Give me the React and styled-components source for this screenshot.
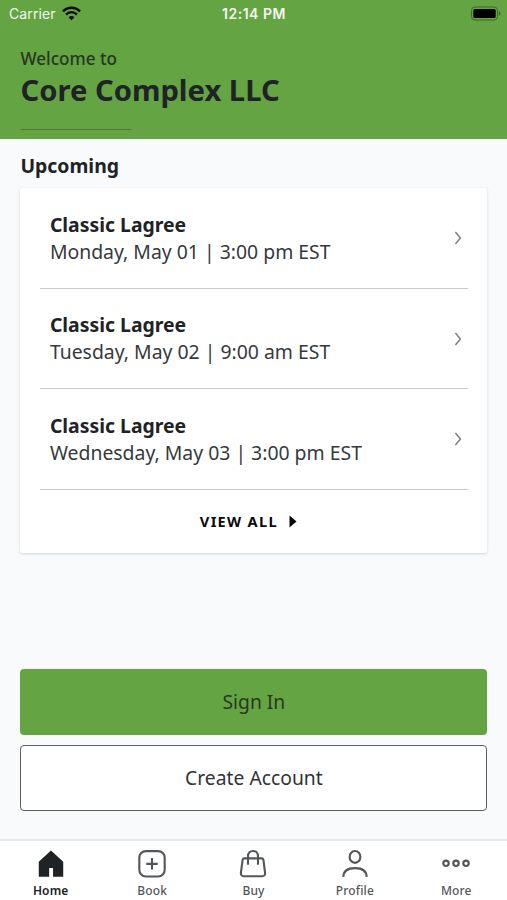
import React from "react";
import styled, { createGlobalStyle } from "styled-components";

const GlobalStyle = createGlobalStyle`
  * {
    box-sizing: border-box;
  }
  body {
    margin: 0;
    background: #f8fafc;
    color: #202326;
    font-family: "Noto Sans", "Open Sans", sans-serif;
  }
`;

const Screen = styled.div`
  display: flex;
  flex-direction: column;
  height: 900px;
`;

const Header = styled.header`
  height: 139px;
  padding: 0 20px;
  background: #64a443;
`;

const StatusBar = styled.div`
  display: grid;
  grid-template-columns: 1fr auto 1fr;
  align-items: center;
  height: 28px;
  margin: 0 -11px;
  color: #f3f8ef;
  font-family: Inter, sans-serif;
  font-size: 14px;
  line-height: 28px;
`;

const Carrier = styled.div`
  display: flex;
  align-items: center;
  gap: 6px;
  letter-spacing: 0.1px;
  svg {
    margin-top: -2px;
  }
`;

const Clock = styled.div`
  padding-left: 1px;
  font-size: 14px;
  font-weight: 600;
  letter-spacing: 0.5px;
`;

const Battery = styled.svg`
  justify-self: end;
  margin: -2px -4px 0 0;
`;

const Welcome = styled.div`
  margin-top: 19px;
  font-size: 17.1px;
  font-weight: 500;
  line-height: 23px;
  color: #26371f;
  padding-left: 0.5px;
`;

const Company = styled.h1`
  margin: 0;
  padding-left: 0.5px;
  font-size: 29.2px;
  font-weight: 700;
  line-height: 40px;
`;

const HeaderRule = styled.hr`
  width: 110px;
  height: 1px;
  margin: 18.5px 0 0 0.5px;
  border: 0;
  background: #4c7f36;
`;

const Content = styled.main`
  display: flex;
  flex-direction: column;
  flex: 1;
  padding: 12px 19.6px 28.5px 20.4px;
`;

const SectionTitle = styled.h2`
  margin: 0 0 8px;
  font-size: 19.4px;
  font-weight: 700;
  line-height: 29px;
`;

const Card = styled.section`
  height: 365px;
  padding: 0 19.5px;
  border-radius: 3px;
  background: #fff;
  box-shadow: 0 1px 3px rgba(30, 40, 40, 0.17);
`;

const ClassRow = styled.div`
  display: flex;
  align-items: center;
  justify-content: space-between;
  height: 100.6px;
  padding: 0 5px 0 10px;
  border-bottom: 1px solid #c9cacb;
  svg {
    margin-top: 1px;
  }
`;

const ClassName = styled.div`
  font-size: 19.4px;
  font-weight: 700;
  line-height: 27px;
`;

const ClassTime = styled.div`
  font-size: 19.4px;
  line-height: 27px;
  color: #36393c;
`;

const ViewAll = styled.div`
  display: flex;
  align-items: center;
  justify-content: center;
  gap: 11px;
  height: 63px;
  padding-right: 11px;
  color: #090a0b;
  font-size: 14.6px;
  font-weight: 700;
  letter-spacing: 1.3px;
`;

const Actions = styled.div`
  display: flex;
  flex-direction: column;
  gap: 10px;
  margin-top: auto;
`;

const Button = styled.button`
  height: 66px;
  padding: 0;
  border: ${(props) => (props.$primary ? "0" : "1.5px solid #5b5e60")};
  border-radius: 4px;
  background: ${(props) => (props.$primary ? "#64a443" : "#fff")};
  color: ${(props) => (props.$primary ? "#263820" : "#303336")};
  font-family: inherit;
  font-size: 19.3px;
`;

const TabBar = styled.nav`
  display: grid;
  grid-template-columns: repeat(5, 1fr);
  height: 61px;
  border-top: 2px solid #e7e9eb;
  background: #fff;
`;

const Tab = styled.div`
  display: flex;
  flex-direction: column;
  align-items: center;
  padding-top: 7px;
  color: ${(props) => (props.$active ? "#202326" : "#54575a")};
  font-size: 12px;
  font-weight: ${(props) => (props.$active ? 600 : 500)};
  line-height: 16px;
  letter-spacing: 0.15px;
  svg {
    margin-bottom: 5px;
  }
`;

const WifiIcon = () => (
  <svg width="19" height="15" viewBox="0 0 19 15" fill="none" stroke="#080b06">
    <path d="M1 5.3C5.8.4 13.2.4 18 5.3" strokeWidth="2.5" />
    <path d="M4 8.5c3.3-3 7.7-3 11 0" strokeWidth="2.4" />
    <path d="M6.6 11.2c1.8-1.5 4-1.5 5.8 0l-2.9 3z" fill="#080b06" stroke="none" />
  </svg>
);

const BatteryIcon = () => (
  <Battery width="31" height="15" viewBox="0 0 31 15">
    <rect x="0.5" y="1" width="26" height="13" rx="3.5" fill="none" stroke="#3f682b" />
    <rect x="2.3" y="3" width="22.4" height="9" rx="1.5" fill="#000" />
    <path d="M27.8 5.3c2.2.8 2.2 3.6 0 4.4z" fill="#3f682b" />
  </Battery>
);

const Chevron = () => (
  <svg width="10" height="14" viewBox="0 0 10 14" fill="none" stroke="#7d7f81" strokeWidth="1.5">
    <path d="M2.4 1l5 6-5 6" />
  </svg>
);

const icons = {
  Home: <path d="M15 1.2L28.2 13.2V29.5H17.2V20H13V29.5H1.8V13.2z" fill="currentColor" stroke="none" />,
  Book: (
    <>
      <rect x="1.3" y="1.8" width="27.4" height="27.4" rx="7" />
      <path d="M15 9.3v12.4M8.8 15.5h12.4" />
    </>
  ),
  Buy: (
    <>
      <path d="M5.4 9.6h19.2c1 0 1.4.6 1.6 1.4l1.8 13.8c.3 2.6-.7 4.1-3 4.1H5c-2.3 0-3.3-1.5-3-4.1L3.8 11c.2-.8.6-1.4 1.6-1.4z" />
      <path d="M9.6 16.5V7.4C9.6 3.7 12 1.6 15 1.6s5.4 2.1 5.4 5.8v9.1" />
    </>
  ),
  Profile: (
    <>
      <ellipse cx="15" cy="8" rx="5.8" ry="6.4" />
      <path d="M2.4 29.6c.2-6.4 4.8-9.4 12.6-9.4s12.4 3 12.6 9.4" />
    </>
  ),
  More: (
    <>
      <circle cx="4.2" cy="15" r="2.9" />
      <circle cx="15" cy="15" r="2.9" />
      <circle cx="25.8" cy="15" r="2.9" />
    </>
  ),
};

const TabIcon = ({ name }) => (
  <svg width="30" height="30" viewBox="-1.2 -1.6 32.4 32.4" fill="none" stroke="currentColor" strokeWidth="2.3">
    {icons[name]}
  </svg>
);

const classes = [
  { name: "Classic Lagree", time: "Monday, May 01 | 3:00 pm EST" },
  { name: "Classic Lagree", time: "Tuesday, May 02 | 9:00 am EST" },
  { name: "Classic Lagree", time: "Wednesday, May 03 | 3:00 pm EST" },
];

const App = () => {
  return (
    <>
      <GlobalStyle />
      <Screen>
        <Header>
          <StatusBar>
            <Carrier>
              Carrier
              <WifiIcon />
            </Carrier>
            <Clock>12:14 PM</Clock>
            <BatteryIcon />
          </StatusBar>
          <Welcome>Welcome to</Welcome>
          <Company>Core Complex LLC</Company>
          <HeaderRule />
        </Header>
        <Content>
          <SectionTitle>Upcoming</SectionTitle>
          <Card>
            {classes.map((v, i) => (
              <ClassRow key={i}>
                <div>
                  <ClassName>{v.name}</ClassName>
                  <ClassTime>{v.time}</ClassTime>
                </div>
                <Chevron />
              </ClassRow>
            ))}
            <ViewAll>
              VIEW ALL
              <svg width="8" height="13" viewBox="0 0 8 13">
                <path d="M0.5 0.5L7.5 6.5L0.5 12.5z" fill="currentColor" />
              </svg>
            </ViewAll>
          </Card>
          <Actions>
            <Button $primary>Sign In</Button>
            <Button>Create Account</Button>
          </Actions>
        </Content>
        <TabBar>
          {Object.keys(icons).map((name) => (
            <Tab key={name} $active={name === "Home"}>
              <TabIcon name={name} />
              {name}
            </Tab>
          ))}
        </TabBar>
      </Screen>
    </>
  );
};

export default App;
